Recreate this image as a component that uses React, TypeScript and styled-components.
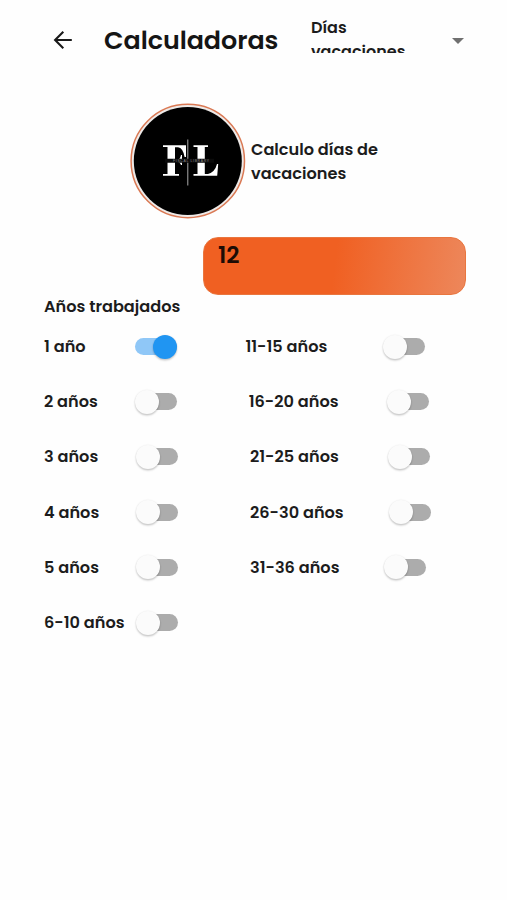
import React, { useState } from "react";
import styled, { createGlobalStyle } from "styled-components";

const GlobalStyle = createGlobalStyle`
  * { box-sizing: border-box; }
  body { margin: 0; background: #fefefe; }
`;

const Page = styled.main`
  width: 507px;
  height: 900px;
  overflow: hidden;
  background: #fefefe;
  color: #1c1c1c;
  font-family: Poppins, Inter, sans-serif;
  font-weight: 600;
  font-size: 16.15px;
`;

const Header = styled.header`
  display: flex;
  align-items: center;
  height: 80px;
  padding-left: 53px;
`;

const BackButton = styled.button`
  display: flex;
  width: 20px;
  height: 20px;
  padding: 0;
  border: 0;
  background: none;
`;

const Title = styled.h1`
  width: 206px;
  margin: 0 0 0 31px;
  font-size: 25.4px;
  line-height: 38px;
  font-weight: 600;
  letter-spacing: -0.04px;
  white-space: nowrap;
  color: #151515;
`;

const Picker = styled.button`
  display: flex;
  align-items: center;
  justify-content: space-between;
  width: 154px;
  height: 53px;
  margin-bottom: 27px;
  padding: 15px 0 0 1px;
  border: 0;
  background: none;
  color: #1c1c1c;
  font: inherit;
  text-align: left;
`;

const PickerValue = styled.span`
  width: 110px;
  height: 38px;
  padding-top: 1px;
  overflow: hidden;
  font-size: 16px;
  line-height: 24px;
`;

const Arrow = styled.svg`
  display: block;
  flex: none;
  margin: 13px 0 0;
`;

const Intro = styled.section`
  display: flex;
  align-items: center;
  height: 116px;
  margin: 23px 0 0 130px;
`;

const Description = styled.p`
  width: 150px;
  margin: 2px 0 0 5px;
  line-height: 24px;
`;

const Result = styled.output`
  display: block;
  width: 263px;
  height: 58px;
  margin: 18px 0 0 203px;
  padding: 3px 14px;
  border: 1px solid #e9763f;
  border-radius: 15px;
  background: linear-gradient(97deg, #f06022 0%, #f06022 50%, #ed875b 100%);
  color: #1d0c05;
  font-size: 23px;
  line-height: 29px;
`;

const SectionTitle = styled.h2`
  height: 24px;
  margin: 0 0 0 44px;
  font-size: 16.15px;
  line-height: 24px;
  font-weight: 600;
`;

const Columns = styled.div`
  display: grid;
  grid-template-columns: 201px 200px;
  margin-left: 44px;
`;

const Column = styled.div`
  display: flex;
  flex-direction: column;
`;

const Row = styled.div<{ $indent: number }>`
  display: flex;
  align-items: center;
  height: 55.2px;
  padding-left: ${(p) => p.$indent}px;
`;

const Label = styled.span<{ $width: number }>`
  flex: none;
  width: ${(p) => p.$width}px;
  white-space: nowrap;
`;

const Track = styled.button<{ $on: boolean }>`
  display: flex;
  align-items: center;
  justify-content: ${(p) => (p.$on ? "flex-end" : "flex-start")};
  width: 42px;
  height: 17px;
  padding: 0;
  border: 0;
  border-radius: 9px;
  background: ${(p) => (p.$on ? "linear-gradient(#8fc7f7, #8fc7f7)" : "linear-gradient(90deg, transparent 8px, #acacac 8px)")};
`;

const Thumb = styled.span<{ $on: boolean }>`
  flex: none;
  width: 24px;
  height: 24px;
  border-radius: 50%;
  background: ${(p) => (p.$on ? "#2095f2" : "#fbfbfb")};
  box-shadow: 0 1.5px 2px rgba(0, 0, 0, 0.2), 0 0 2px rgba(0, 0, 0, 0.08);
`;

type Option = { label: string; indent?: number; width: number };

const LEFT: Option[] = [
  { label: "1 año", width: 91 },
  { label: "2 años", width: 91 },
  { label: "3 años", width: 91.5 },
  { label: "4 años", width: 91.5 },
  { label: "5 años", width: 91.5 },
  { label: "6-10 años", width: 91.5 },
];

const RIGHT: Option[] = [
  { label: "11-15 años", indent: 0.4, width: 137.4 },
  { label: "16-20 años", indent: 3.7, width: 138.8 },
  { label: "21-25 años", indent: 5, width: 137.5 },
  { label: "26-30 años", indent: 5, width: 138.6 },
  { label: "31-36 años", indent: 5, width: 134 },
];

function Logo() {
  return (
    <svg width="116" height="116" viewBox="0 0 116 116">
      <circle cx="57.8" cy="58" r="56.7" fill="#eeeae8" stroke="#da7954" strokeWidth="1.5" />
      <circle cx="57.8" cy="58" r="54" fill="#000" />
      <g fill="#fff">
        <path d="M33 42.3H56V54H54.6Q53 45 48 44.3H45V57H47Q50 57 51 52H52V62H51Q50 59 47 59H45V71H49V72.8H33V71H37.5V44H33Z" />
        <path d="M63.5 42.3H78V44H74.8V71H78Q85 69 87 61H88.2L87.2 72.8H63.5V71H67.5V44H63.5Z" />
      </g>
      <path d="M57.8 36.5V82.5" stroke="#aaa" strokeWidth="1" />
      <path d="M35 57.7H84" stroke="#0a0a0a" strokeWidth="4" />
      <text x="43" y="59" fill="#8d8d8d" fontFamily="Liberation Sans" fontSize="3.4" fontWeight="400" textLength="36">FISCAL LIBRARY</text>
    </svg>
  );
}

function OptionRow({ option, on, onPick }: { option: Option; on: boolean; onPick: () => void }) {
  return (
    <Row $indent={option.indent ?? 0}>
      <Label $width={option.width}>{option.label}</Label>
      <Track $on={on} role="switch" aria-checked={on} aria-label={option.label} onClick={onPick}>
        <Thumb $on={on} />
      </Track>
    </Row>
  );
}

export default function App() {
  const [selected, setSelected] = useState("1 año");
  return (
    <>
      <GlobalStyle />
      <Page>
        <Header>
          <BackButton aria-label="Volver">
            <svg width="20" height="20" viewBox="0 0 20 20" fill="none" stroke="#191919" strokeWidth="2.1">
              <path d="M18.8 10H2.2M10.3 1.8L2.1 10L10.3 18.2" />
            </svg>
          </BackButton>
          <Title>Calculadoras</Title>
          <Picker>
            <PickerValue>Días vacaciones</PickerValue>
            <Arrow width="12" height="6" viewBox="0 0 12 6"><path d="M0 0H12L6 6Z" fill="#707070" /></Arrow>
          </Picker>
        </Header>
        <Intro>
          <Logo />
          <Description>Calculo días de vacaciones</Description>
        </Intro>
        <Result>12</Result>
        <SectionTitle>Años trabajados</SectionTitle>
        <Columns>
          {[LEFT, RIGHT].map((options, i) => (
            <Column key={i}>
              {options.map((o) => (
                <OptionRow key={o.label} option={o} on={selected === o.label} onPick={() => setSelected(o.label)} />
              ))}
            </Column>
          ))}
        </Columns>
      </Page>
    </>
  );
}
